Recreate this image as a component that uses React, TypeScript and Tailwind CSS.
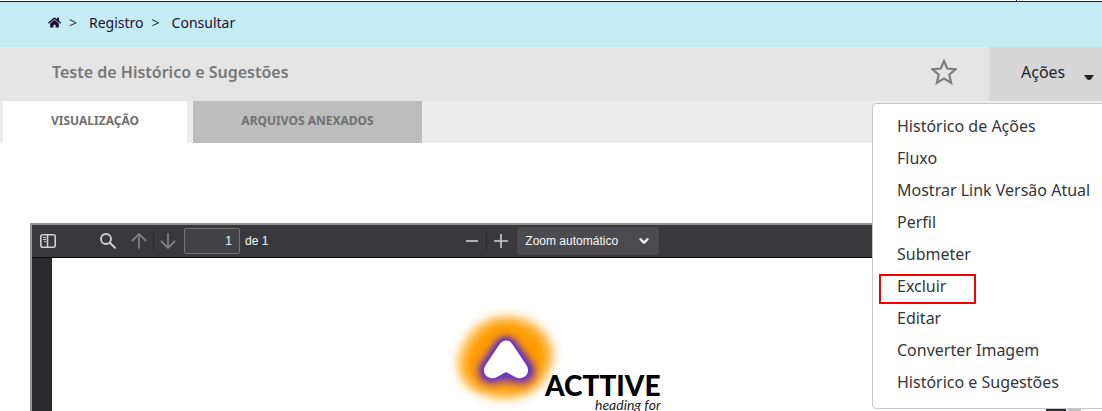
import { ChevronDown } from 'lucide-react';
import { FaHome } from 'react-icons/fa';

const actions = [
  'Histórico de Ações',
  'Fluxo',
  'Mostrar Link Versão Atual',
  'Perfil',
  'Submeter',
  'Excluir',
  'Editar',
  'Converter Imagem',
  'Histórico e Sugestões',
];

function Breadcrumb() {
  return (
    <nav aria-label="Caminho" className="flex h-[45px] items-center bg-[#c5ebf4] pb-1 pl-12 text-sm text-[#1b1035]">
      <a href="#inicio" aria-label="Início">
        <FaHome className="size-[13px]" />
      </a>
      <span className="ml-2 text-[#333]">&gt;</span>
      <a href="#registro" className="ml-3">Registro</a>
      <span className="ml-2 text-[#333]">&gt;</span>
      <a href="#consultar" className="ml-3">Consultar</a>
    </nav>
  );
}

function ActionsMenu() {
  return (
    <div className="relative w-[113px] bg-[#d7d7d7]">
      <button type="button" className="flex h-full w-full items-center pb-1 pl-8 text-base text-[#212529]">
        Ações
        <svg viewBox="0 0 10 5" className="mt-2.5 ml-[19px] h-[5px] w-[10px]" fill="#212529">
          <path d="M0 0h10L7 4.2Q5 5.6 3 4.2z" />
        </svg>
      </button>
      <ul className="absolute top-[56px] -right-4 w-[246px] rounded border border-[#c8c8c8] bg-white pt-1.5 pb-2.5 text-base text-[#33373b]">
        {actions.map((name) => (
          <li key={name} className="relative">
            <button type="button" className="block h-8 w-full pl-6 text-left whitespace-nowrap">{name}</button>
            {name === 'Excluir' && (
              <span className="pointer-events-none absolute top-1 left-1.5 h-[30px] w-[97px] border-2 border-[#f60000]" />
            )}
          </li>
        ))}
      </ul>
    </div>
  );
}

function Logo() {
  return (
    <svg viewBox="0 0 250 120" className="ml-[378px] h-[120px] w-[250px]" role="img" aria-label="Acttive heading for">
      <defs>
        <filter id="halo" filterUnits="userSpaceOnUse" x="0" y="-10" width="160" height="140">
          <feGaussianBlur stdDeviation="4" />
        </filter>
        <filter id="glow" filterUnits="userSpaceOnUse" x="0" y="-10" width="160" height="140">
          <feGaussianBlur stdDeviation="4.5" />
        </filter>
        <filter id="edge" filterUnits="userSpaceOnUse" x="0" y="-10" width="160" height="140">
          <feGaussianBlur stdDeviation="2" />
        </filter>
      </defs>
      <path d="M76 15c-19 0-34 11-42 25-8 13-10 26-4 38 7 14 27 22 46 22 18-1 32-8 39-19 7-10 12-24 8-36C117 27 100 15 76 15z" fill="#ffc96f" filter="url(#halo)" />
      <path d="M76 22c-17 0-28 10-35 23-7 11-9 22-4 31 6 12 23 17 39 17 17 0 28-6 33-15 6-10 10-20 7-30C110 32 95 22 76 22z" fill="#ff9d05" filter="url(#halo)" />
      <path d="M76 50L61 71l15-3 16 3z" fill="#7e3ba8" stroke="#7e3ba8" strokeWidth="26" strokeLinejoin="round" filter="url(#glow)" />
      <path d="M76 47L61 70l15-3 16 3z" fill="#6534c0" stroke="#6534c0" strokeWidth="19" strokeLinejoin="round" filter="url(#edge)" />
      <path d="M69 45c4-6 10-6 14 0l14 21c4 8-4 15-12 11l-9-5-9 5c-8 4-16-3-12-11z" fill="white" />
      <text x="115" y="96" className="font-[Lato] text-[28px] font-black" fill="black">ACTTIVE</text>
      <text x="165" y="110" className="font-[Lato] text-[14px] italic" fill="#222">heading for</text>
    </svg>
  );
}

function PdfViewer() {
  return (
    <section aria-label="Documento" className="mr-[17px] ml-[30px] border-t-2 border-l-2 border-[#939393] font-['Liberation_Sans',sans-serif]">
      <div className="flex h-[33px] items-center border-b border-[#0c0c0d] bg-[#38383d] text-xs text-[#f9f9fa]">
        <button type="button" aria-label="Painel lateral" className="ml-2">
          <svg viewBox="0 0 16 16" className="size-4" fill="none" stroke="#d0d0d2" strokeWidth="1.6">
            <rect x="0.8" y="1.8" width="14.4" height="12.4" rx="2" />
            <path d="M7.5 2v12" />
            <path d="M3 4.5h3M3 6.5h3M4 8.5h2" strokeWidth="1" />
          </svg>
        </button>
        <button type="button" aria-label="Localizar" className="ml-11">
          <svg viewBox="0 0 16 16" className="size-4" fill="none" stroke="#d0d0d2" strokeWidth="1.9" strokeLinecap="round">
            <circle cx="6" cy="6" r="5" />
            <path d="M9.8 9.8l5.2 5" />
          </svg>
        </button>
        <button type="button" aria-label="Página anterior" className="ml-[15px]">
          <svg viewBox="0 0 16 16" className="size-4" fill="none" stroke="#7d7d81" strokeWidth="1.8" strokeLinecap="round" strokeLinejoin="round">
            <path d="M8 15V1M1.5 7.5L8 1l6.5 6.5" />
          </svg>
        </button>
        <span className="mx-1.5 h-5 w-px bg-[#29292d]" />
        <button type="button" aria-label="Próxima página">
          <svg viewBox="0 0 16 16" className="size-4" fill="none" stroke="#7d7d81" strokeWidth="1.8" strokeLinecap="round" strokeLinejoin="round">
            <path d="M8 1v14M1.5 8.5L8 15l6.5-6.5" />
          </svg>
        </button>
        <input aria-label="Página" defaultValue="1" className="ml-2 h-[26px] w-14 rounded-xs border border-[#737377] bg-[#414146] pr-[7px] text-right" />
        <span className="ml-[5px]">de 1</span>
        <button type="button" aria-label="Reduzir" className="ml-[196px]">
          <svg viewBox="0 0 16 16" className="size-4" stroke="#d0d0d2" strokeWidth="1.6">
            <path d="M2 8h12" />
          </svg>
        </button>
        <span className="mx-1.5 h-5 w-px bg-[#29292d]" />
        <button type="button" aria-label="Ampliar">
          <svg viewBox="0 0 16 16" className="size-4" stroke="#d0d0d2" strokeWidth="1.6">
            <path d="M1 8h14M8 1v14" />
          </svg>
        </button>
        <span className="relative ml-2 flex items-center">
          <select aria-label="Zoom" className="h-7 w-[142px] appearance-none rounded-xs bg-[#4a4a4f] pl-2">
            <option>Zoom automático</option>
          </select>
          <ChevronDown className="pointer-events-none absolute right-2 size-3.5" strokeWidth={4} />
        </span>
      </div>
      <div className="flex bg-[#2a2a2e]">
        <div className="ml-5 flex-1 bg-white pt-[42px]">
          <Logo />
        </div>
        <div className="w-5" />
        <div className="w-[19px] border-r-4 border-l-2 border-[#f1f1f1] bg-[#c1c1c1]" />
      </div>
    </section>
  );
}

export default function App() {
  return (
    <main className="h-screen overflow-hidden bg-white font-['Noto_Sans',sans-serif]">
      <div className="flex h-[2px] justify-end border-b border-[#1f1a63]">
        <span className="mr-[85px] w-px bg-[#1f1a63]" />
      </div>
      <Breadcrumb />
      <header className="relative z-10 flex h-[54px] bg-[#e5e5e5]">
        <h1 className="flex flex-1 items-center pb-1 pl-[52px] text-base font-semibold text-[#777]">Teste de Histórico e Sugestões</h1>
        <button type="button" aria-label="Favoritar" className="mr-8 pb-1">
          <svg viewBox="0 0 26 26" className="size-[26px]" fill="none" stroke="#808080" strokeWidth="2.2">
            <path d="M13 2l3.3 7.5 8.2.8-6.2 5.4 1.8 8L13 19.5l-7.1 4.2 1.8-8-6.2-5.4 8.2-.8z" />
          </svg>
        </button>
        <ActionsMenu />
      </header>
      <div role="tablist" className="flex h-[42px] gap-1.5 bg-[#ededed] pl-[3px] text-xs font-bold text-[#707070]">
        <button type="button" role="tab" aria-selected="true" className="w-[184px] bg-white pb-0.5">VISUALIZAÇÃO</button>
        <button type="button" role="tab" aria-selected="false" className="w-[229px] bg-[#bdbdbd] pb-0.5">ARQUIVOS ANEXADOS</button>
      </div>
      <div className="pt-20">
        <PdfViewer />
      </div>
    </main>
  );
}
